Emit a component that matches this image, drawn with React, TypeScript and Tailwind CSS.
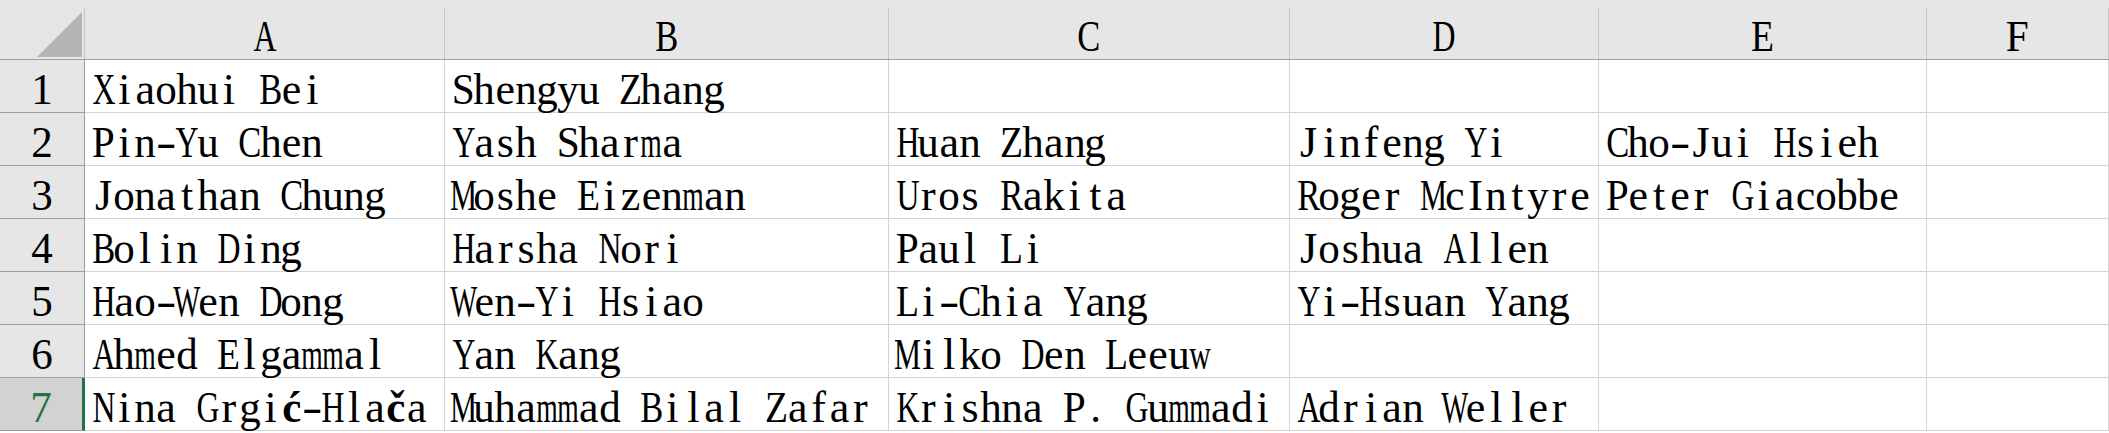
import React from 'react'

const cols = ['A', 'B', 'C', 'D', 'E', 'F']

const rows: string[][] = [
  ['Xiaohui Bei', 'Shengyu Zhang', '', '', '', ''],
  ['Pin-Yu Chen', 'Yash Sharma', 'Huan Zhang', 'Jinfeng Yi', 'Cho-Jui Hsieh', ''],
  ['Jonathan Chung', 'Moshe Eizenman', 'Uros Rakita', 'Roger McIntyre', 'Peter Giacobbe', ''],
  ['Bolin Ding', 'Harsha Nori', 'Paul Li', 'Joshua Allen', '', ''],
  ['Hao-Wen Dong', 'Wen-Yi Hsiao', 'Li-Chia Yang', 'Yi-Hsuan Yang', '', ''],
  ['Ahmed Elgammal', 'Yan Kang', 'Milko Den Leeuw', '', '', ''],
  ['Nina Grgić-Hlača', 'Muhammad Bilal Zafar', 'Krishna P. Gummadi', 'Adrian Weller', '', ''],
]

const gridCols = 'grid grid-cols-[85px_360px_444px_401px_309px_328px_1fr]'

// Times advance widths (per 1000 em) so wide glyphs can be squeezed into a half-width cell
const widths: Record<string, number> = {
  A: 722, B: 667, C: 667, D: 722, E: 611, F: 556, G: 722, H: 722, I: 333, J: 389, K: 722, L: 611, M: 889,
  N: 722, O: 722, P: 556, Q: 722, R: 667, S: 556, T: 611, U: 722, V: 722, W: 944, X: 722, Y: 722, Z: 611,
  a: 444, b: 500, c: 444, d: 500, e: 444, f: 333, g: 500, h: 500, i: 278, j: 278, k: 500, l: 278, m: 778,
  n: 500, o: 500, p: 500, q: 500, r: 333, s: 389, t: 278, u: 500, v: 500, w: 722, x: 500, y: 500, z: 444,
}

function squeeze(ch: string) {
  if (ch === '-') return 1.4
  const w = ((widths[ch] ?? 500) * 44) / 1000
  const target = ch === 'M' || ch === 'W' ? 27 : ch >= 'A' && ch <= 'Z' ? 23 : 21.5
  return Math.min(1, target / w)
}

// fixed-pitch serif look: every glyph sits in its own half-width box
function Mono({ text }: { text: string }) {
  return (
    <span className="inline-flex whitespace-nowrap h-[44px] leading-[44px]">
      {[...text].map((ch, k) => (
        <span key={k} className="inline-flex shrink-0 justify-center w-[20.9px]">
          <span
            className={`inline-block ${ch === 'ć' || ch === 'č' ? 'font-bold' : ''}`}
            style={{ transform: `scaleX(${squeeze(ch)})` }}
          >
            {ch === ' ' ? '\u00a0' : ch}
          </span>
        </span>
      ))}
    </span>
  )
}

export default function App() {
  return (
    <div className="w-[2109px] h-[433px] overflow-hidden bg-white text-black font-['Liberation_Serif',serif] text-[44px]">
      {/* column header */}
      <div className={`${gridCols} h-[60px] bg-[#e6e6e6] border-b border-[#9e9e9e]`}>
        <div className="relative border-r border-[#c6c6c6] mt-[8px]">
          <svg className="absolute left-[37px] top-[4px]" width="46" height="46" viewBox="0 0 46 46">
            <polygon points="45,0 45,45 0,45" fill="#b4b4b4" />
          </svg>
        </div>
        {cols.map((c) => (
          <div key={c} className="mt-[8px] border-r border-[#c6c6c6] flex justify-center items-start pt-[7px]">
            <Mono text={c} />
          </div>
        ))}
      </div>

      {rows.map((r, i) => {
        const sel = i === 6
        return (
          <div key={i} className={`${gridCols} h-[53px]`}>
            <div
              className={`flex justify-center items-start pt-[8px] border-b ${
                sel
                  ? 'bg-[#d2d2d2] text-[#217346] border-r-[3px] border-r-[#217346] border-b-[#9e9e9e]'
                  : 'bg-[#e6e6e6] border-r border-[#9e9e9e]'
              }`}
            >
              <Mono text={String(i + 1)} />
            </div>
            {r.map((t, j) => (
              <div key={j} className="border-r border-b border-[#d4d4d4] pl-[8px] flex items-start pt-[8px]">
                {t && <Mono text={t} />}
              </div>
            ))}
          </div>
        )
      })}
    </div>
  )
}
